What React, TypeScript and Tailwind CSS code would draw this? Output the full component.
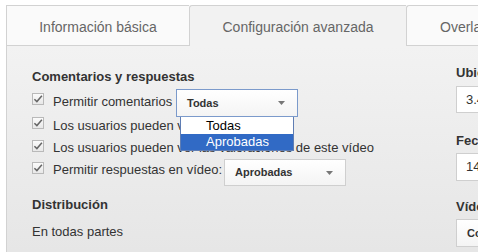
import React from "react";

const Check = ({ className = "" }: { className?: string }) => (
  <span
    className={
      "w-[12px] h-[12px] shrink-0 border border-[#b9b9b9] bg-linear-to-b from-[#fbfbfb] to-[#e8e8e8] flex items-center justify-center " +
      className
    }
  >
    <svg width="10" height="10" viewBox="0 0 10 10">
      <path d="M1.4 5.2 L3.9 7.6 L8.9 1.8" fill="none" stroke="#666" strokeWidth="1.5" />
    </svg>
  </span>
);

const Arrow = () => (
  <svg width="7" height="4" viewBox="0 0 7 4" className="shrink-0">
    <path d="M0 0h7L3.5 4z" fill="#777" />
  </svg>
);

export default function App() {
  return (
    <div className="w-[478px] h-[252px] overflow-hidden bg-white pt-[5px] pl-[6px] flex flex-col font-['Liberation_Sans',Arial,sans-serif]">
      {/* Tabs */}
      <div className="flex h-[41px] shrink-0 text-[14px] text-[#666] leading-[16px]">
        <div className="w-[183px] shrink-0 border-l border-t border-b border-[#d2d2d2] bg-[#fafafa] flex justify-center pt-[13px] whitespace-nowrap">
          Información básica
        </div>
        <div className="w-[217px] shrink-0 border-l border-t border-[#d2d2d2] rounded-tl-[3px] bg-[#f2f2f2] flex justify-center pt-[13px] whitespace-nowrap">
          Configuración avanzada
        </div>
        <div className="flex-1 border-l border-t border-b border-[#d2d2d2] rounded-tl-[3px] bg-[#fafafa] pl-[33px] pt-[13px] whitespace-nowrap overflow-hidden">
          Overlays de anuncios
        </div>
      </div>

      {/* Panel */}
      <div className="flex-1 flex border-l border-[#d2d2d2] bg-linear-to-b from-[#f2f2f2] to-[#e6e6e6] text-[13px] text-[#333]">
        {/* Left column */}
        <div className="w-[449px] shrink-0 pl-[25px] pt-[23px]">
          <div className="font-bold leading-[16px]">Comentarios y respuestas</div>

          <div className="flex items-start h-[28px] mt-[4px]">
            <Check className="mt-[4px]" />
            <span className="ml-[9px] mt-[5px] leading-[16px] w-[123px] shrink-0 whitespace-nowrap">
              Permitir comentarios
            </span>
            <div className="relative">
              <div className="w-[122px] h-[28px] border border-[#7b9acb] bg-linear-to-b from-white to-[#f4f4f4] flex items-center justify-between pl-[10px] pr-[12px] text-[11px] font-bold">
                <span>Todas</span>
                <Arrow />
              </div>
              <div className="absolute z-10 left-[4px] top-[28px] w-[114px] border-x border-b border-[#5f7db3] bg-white text-[13px]">
                <div className="h-[17px] leading-[17px] pl-[25px] text-black">Todas</div>
                <div className="h-[16px] leading-[16px] pl-[25px] bg-[#316ac5] text-white">Aprobadas</div>
              </div>
            </div>
          </div>

          <div className="flex items-start h-[22px] whitespace-nowrap">
            <Check />
            <span className="ml-[9px] mt-[1px] leading-[16px]">Los usuarios pueden votar comentarios</span>
          </div>

          <div className="flex items-start h-[20px] whitespace-nowrap">
            <Check className="mt-[1px]" />
            <span className="ml-[9px] mt-[1px] leading-[16px]">
              Los usuarios pueden ver las valoraciones de este vídeo
            </span>
          </div>

          <div className="flex items-start h-[27px]">
            <Check className="mt-[3px]" />
            <span className="ml-[9px] mt-[3px] leading-[16px] w-[171px] shrink-0 whitespace-nowrap">
              Permitir respuestas en vídeo:
            </span>
            <div className="w-[122px] h-[27px] border border-[#cfcfcf] bg-linear-to-b from-white to-[#f4f4f4] flex items-center justify-between pl-[10px] pr-[12px] text-[11px] font-bold">
              <span>Aprobadas</span>
              <Arrow />
            </div>
          </div>

          <div className="font-bold leading-[16px] mt-[11px]">Distribución</div>
          <div className="leading-[16px] mt-[11px]">En todas partes</div>
        </div>

        {/* Right column */}
        <div className="w-[220px] shrink-0 pt-[19px] whitespace-nowrap">
          <div className="font-bold leading-[16px]">Ubicación del vídeo</div>
          <div className="mt-[5px] h-[27px] border border-[#cfcfcf] bg-white flex items-center pl-[9px]">
            3.4567, -76.5225
          </div>
          <div className="font-bold leading-[16px] mt-[20px]">Fecha de grabación</div>
          <div className="mt-[4px] h-[28px] border border-[#cfcfcf] bg-white flex items-center pl-[9px]">
            14/05/2013
          </div>
          <div className="font-bold leading-[16px] mt-[18px]">Vídeo 3D</div>
          <div className="mt-[4px] h-[28px] border border-[#cfcfcf] bg-linear-to-b from-white to-[#f4f4f4] flex items-center pl-[10px] text-[11px] font-bold">
            Convertir a 3D
          </div>
        </div>
      </div>
    </div>
  );
}
